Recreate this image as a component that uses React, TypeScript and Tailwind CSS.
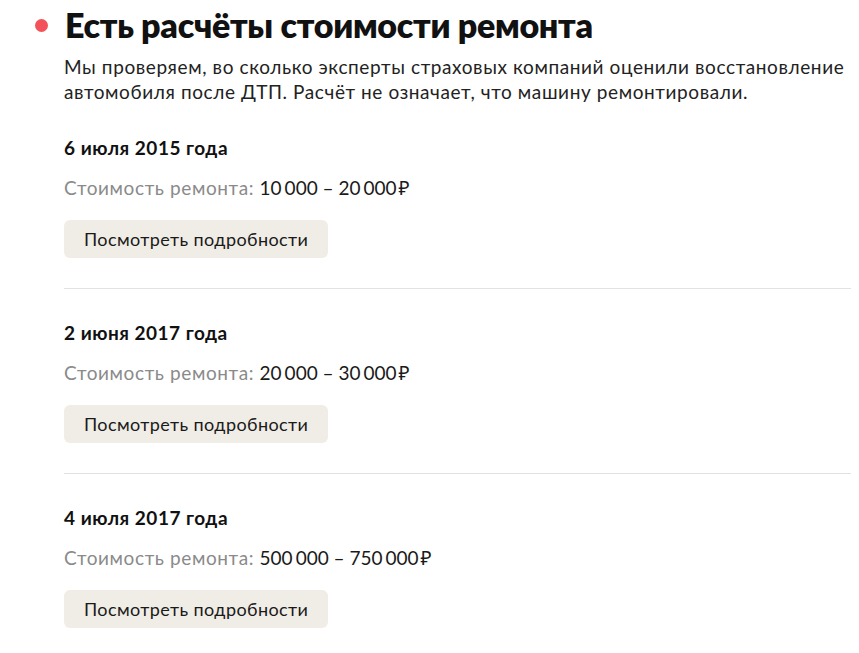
import React from "react";

type Estimate = {
  date: string;
  from: [string, string];
  to: [string, string];
};

const estimates: Estimate[] = [
  { date: "6 июля 2015 года", from: ["10", "000"], to: ["20", "000"] },
  { date: "2 июня 2017 года", from: ["20", "000"], to: ["30", "000"] },
  { date: "4 июля 2017 года", from: ["500", "000"], to: ["750", "000"] },
];

// thousands groups with a narrow gap, like the reference typography
function Amount({ parts }: { parts: [string, string] }) {
  return (
    <span>
      {parts[0]}
      <span className="ml-[3px]">{parts[1]}</span>
    </span>
  );
}

function EstimateItem({ item, last }: { item: Estimate; last: boolean }) {
  return (
    <div className={`pt-[32px] ${last ? "" : "pb-[30px] border-b border-[#e2e2e2]"}`}>
      <div className="text-[19px] font-bold leading-[24px] tracking-[0.5px] text-[#111]">{item.date}</div>
      <div className="mt-[16px] text-[19px] leading-[24px] tracking-[0.6px]">
        <span className="text-[#8a8a8a]">Стоимость ремонта: </span>
        <span className="tracking-[0px] text-[#1a1a1a]">
          <Amount parts={item.from} /> – <Amount parts={item.to} />
          <span className="ml-[2px]">₽</span>
        </span>
      </div>
      <button
        type="button"
        className="mt-[20px] h-[38px] rounded-[6px] bg-[#f0ede6] px-[20px] text-[18px] tracking-[0.4px] text-[#1a1a1a]"
      >
        Посмотреть подробности
      </button>
    </div>
  );
}

export default function App() {
  return (
    <div className="min-h-screen bg-white font-['Lato','Noto_Sans',sans-serif]">
      <section className="pt-[4px] pr-[8px]">
        {/* Heading */}
        <div className="flex items-center">
          <span className="ml-[35px] mr-[17px] h-[13px] w-[13px] rounded-full bg-[#f2535a]" />
          <h2 className="text-[34px] font-extrabold leading-[42px] tracking-[-0.3px] text-[#111]">
            Есть расчёты стоимости ремонта
          </h2>
        </div>

        <div className="pl-[64px]">
          <p className="mt-[8px] text-[19px] leading-[25px] tracking-[0.6px] text-[#222]">
            Мы проверяем, во сколько эксперты страховых компаний оценили восстановление автомобиля после ДТП.
            Расчёт не означает, что машину ремонтировали.
          </p>

          {estimates.map((item, i) => (
            <EstimateItem key={item.date} item={item} last={i === estimates.length - 1} />
          ))}
        </div>
      </section>
    </div>
  );
}
